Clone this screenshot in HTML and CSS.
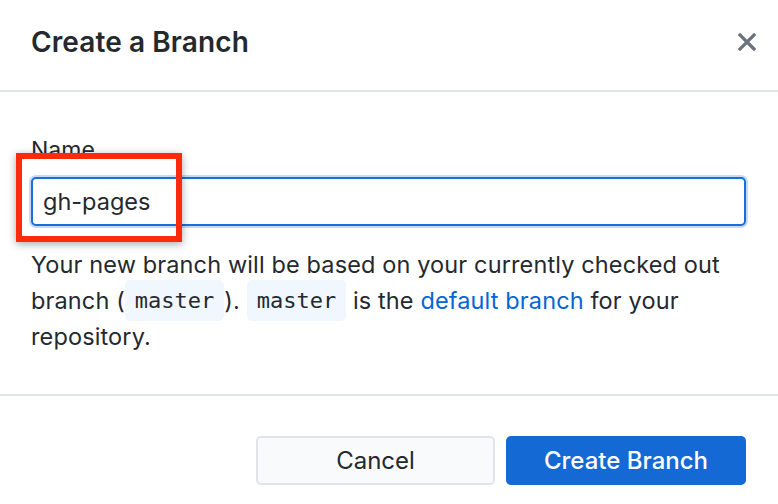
FILE: index.html
```html
<!DOCTYPE html>
<html>
<head>
<meta charset="utf-8">
<link rel="stylesheet" href="styles.css">
</head>
<body>
<div class="dialog">
  <header class="dialog-header">
    <h1 class="title">Create a Branch</h1>
    <button class="close" aria-label="Close">
      <svg width="18" height="18" viewBox="0 0 18 18"><path d="M2 2 L16 16 M16 2 L2 16" stroke="#6a737d" stroke-width="3.2" stroke-linecap="square"/></svg>
    </button>
  </header>
  <section class="dialog-body">
    <label class="label" for="name">Name</label>
    <div class="field">
      <input id="name" class="input" type="text" value="gh-pages">
      <div class="highlight"></div>
    </div>
    <p class="desc">Your new branch will be based on your currently checked out branch (<code>master</code>). <code>master</code> is the <a href="#">default branch</a> for your repository.</p>
  </section>
  <footer class="dialog-footer">
    <button class="btn btn-cancel">Cancel</button>
    <button class="btn btn-primary">Create Branch</button>
  </footer>
</div>
</body>
</html>
```

FILE: styles.css
```css
* { box-sizing: border-box; }
html, body { margin: 0; padding: 0; background: #fff; }
body { font-family: Inter, "Noto Sans", sans-serif; color: #24292e; }

.dialog { width: 778px; height: 504px; display: flex; flex-direction: column; }

.dialog-header {
  height: 92px;
  border-bottom: 2px solid #e1e4e8;
  display: flex;
  align-items: center;
  justify-content: space-between;
  padding: 0 22px 7px 31px;
}
.title { margin: 0; font-size: 28px; font-weight: 600; letter-spacing: 0.1px; color: #24292e; }
.close { border: 0; background: none; padding: 0; width: 18px; height: 18px; display: flex; }

.dialog-body { height: 302px; padding: 44px 32px 0 31px; }
.label { display: block; font-size: 23px; line-height: 28px; color: #24292e; margin-bottom: 13px; }
.field { position: relative; }
.input {
  display: block;
  width: 100%;
  height: 49px;
  border: 2px solid #1a6ed8;
  border-radius: 5px;
  box-shadow: 0 0 0 2px #c3dbf6;
  padding: 0 10px;
  font-family: Inter, "Noto Sans", sans-serif;
  font-size: 23.5px;
  color: #24292e;
  outline: none;
}
.highlight {
  position: absolute;
  left: -15px;
  top: -24px;
  width: 166px;
  height: 89px;
  border: 6px solid #fe2a0b;
  box-shadow: 0 2px 8px rgba(0,0,0,0.35);
  pointer-events: none;
}
.desc { margin: 21px 0 0; font-size: 23.5px; line-height: 36px; letter-spacing: 0.13px; color: #24292e; }
.desc code {
  display: inline-block;
  font-family: "DejaVu Sans Mono", monospace;
  font-size: 22px;
  letter-spacing: 0;
  line-height: 36px;
  vertical-align: top;
  background: #f1f7ff;
  border-radius: 5px;
  box-shadow: 0 -3px 0 #f1f7ff, 0 2px 0 #f1f7ff;
  padding: 0 10px;
}
.desc a { color: #0366d6; text-decoration: none; }

.dialog-footer {
  border-top: 2px solid #e1e4e8;
  flex: 1;
  display: flex;
  justify-content: flex-end;
  align-items: flex-start;
  gap: 11px;
  padding: 40px 32px 0 0;
}
.btn {
  width: 239px;
  height: 49px;
  border-radius: 5px;
  font-family: Inter, "Noto Sans", sans-serif;
  font-size: 24px;
}
.btn-cancel { background: #f9fafb; border: 2px solid #e1e4e8; color: #24292e; }
.btn-primary { width: 240px; background: #1469d5; border: 0; color: #fff; font-weight: 500; }
```
